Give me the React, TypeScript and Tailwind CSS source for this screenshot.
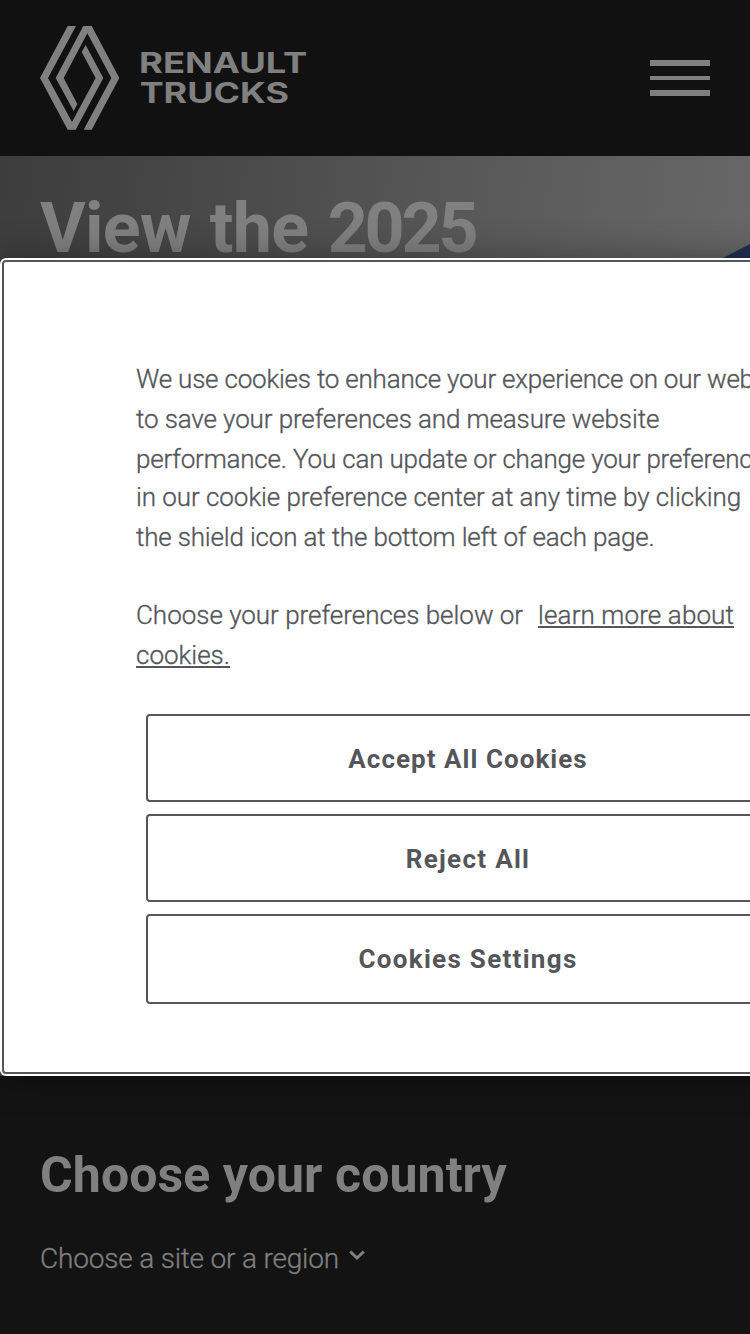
const bodyText = "font-light text-[26px] leading-10 whitespace-nowrap [-webkit-text-stroke:0.35px_#54565a]";
const actionButton =
  "flex w-[642px] justify-center rounded-[4px] border-2 border-[#54565a] bg-white pl-0.5 text-[26px] leading-[86px] font-bold text-[#54565a]";

function Logo() {
  return (
    <svg className="h-[130px] w-[300px]" viewBox="0 0 900 390" fill="#808080" role="img" aria-label="Renault Trucks">
      <path d="M113 48H138L54 204L126 336L197 204L155 126L167 105L220 204L137 359H113L30 204Z" />
      <path d="M160 48H185L268 204L185 359H161L244 204L172 70L101 204L142 282L131 303L77 204Z" />
      <g fontFamily="Inter, sans-serif" fontWeight="700" fontSize="84">
        <text x="327" y="190" textLength="505" lengthAdjust="spacingAndGlyphs">RENAULT</text>
        <text x="329" y="278" textLength="448" lengthAdjust="spacingAndGlyphs">TRUCKS</text>
      </g>
    </svg>
  );
}

function Header() {
  return (
    <header className="flex h-[156px] items-start justify-between bg-[#111111] pr-10 pl-[30px]">
      <div className="pt-2.5">
        <Logo />
      </div>
      <button aria-label="Menu" className="mt-[60px] flex w-[60px] flex-col">
        <span className="h-1.5 w-full bg-[#808080]" />
        <span className="mt-2.5 h-1 w-full bg-[#808080]" />
        <span className="mt-2.5 h-1.5 w-full bg-[#808080]" />
      </button>
    </header>
  );
}

function Hero() {
  return (
    <section className="relative h-[920px] bg-[linear-gradient(97deg,#3d3d3d_0%,#434343_14%,#5b5b5b_60%,#6c6c6c_100%)] pt-[30px] pl-10">
      <svg className="absolute top-[80px] right-0 h-[40px] w-[50px]" viewBox="0 0 50 40" aria-hidden="true">
        <path d="M12 30L21 23L50 8V40H12Z" fill="#213156" />
      </svg>
      <h1 className="text-[70px] leading-[84px] font-bold tracking-[-0.7px] whitespace-nowrap text-[#808080] [word-spacing:2.5px]">
        View the <span className="tracking-[-3.2px]">2025</span>
      </h1>
    </section>
  );
}

function CountryPicker() {
  return (
    <section className="h-[258px] bg-[#131313] pt-[69px] pl-10 text-[#808080]">
      <h2 className="text-[50px] leading-[60px] font-bold tracking-[0.08px] whitespace-nowrap">Choose your country</h2>
      <button className="mt-[34px] flex items-center text-[28px] leading-10 font-light tracking-[-0.18px] whitespace-nowrap [-webkit-text-stroke:0.3px_#808080]">
        Choose a site or a region
        <svg className="mb-2 ml-2.5 h-[10px] w-[16px]" viewBox="0 0 16 10" fill="none" stroke="#808080" strokeWidth="3" aria-hidden="true">
          <path d="M1.2 1.5L8 8L14.8 1.5" />
        </svg>
      </button>
    </section>
  );
}

function CookieDialog() {
  return (
    <div
      role="dialog"
      className="absolute top-[258px] left-0 w-[936px] rounded-[6px] bg-white p-0.5 text-[#54565a] shadow-[0_0_36px_rgba(0,0,0,0.36)]"
    >
      <div className="h-[814px] rounded-[4px] border-2 border-[#54565a] pt-[97px] pl-[132px]">
        <div className={bodyText}>
          <p>
            <span className="block tracking-[-0.21px]">We use cookies to enhance your experience on our website,</span>
            <span className="block tracking-[-0.12px]">to save your preferences and measure website</span>
            <span className="block tracking-[-0.19px]">performance. You can update or change your preferences</span>
            <span className="-mt-0.5 block tracking-[-0.06px]">in our cookie preference center at any time by clicking</span>
            <span className="block tracking-[-0.17px]">the shield icon at the bottom left of each page.</span>
          </p>
          <p className="mt-[38px]">
            <span className="tracking-[-0.02px]">Choose your preferences below or</span>
            <a className="ml-[15px] tracking-[0.11px] underline decoration-2 underline-offset-[2px]">learn more about</a>
            <br />
            <a className="underline decoration-2 underline-offset-[2px]">cookies.</a>
          </p>
        </div>
        <div className="mt-[39px] ml-2.5 flex flex-col gap-3">
          <button className={`${actionButton} h-[88px] tracking-[1.04px]`}>Accept All Cookies</button>
          <button className={`${actionButton} h-[88px] tracking-[1.3px]`}>Reject All</button>
          <button className={`${actionButton} h-[90px] tracking-[1.3px]`}>Cookies Settings</button>
        </div>
      </div>
    </div>
  );
}

export default function App() {
  return (
    <div className="relative h-[1334px] w-[750px] overflow-hidden bg-[#131313] font-[Roboto,sans-serif]">
      <Header />
      <main>
        <Hero />
        <CountryPicker />
      </main>
      <CookieDialog />
    </div>
  );
}
